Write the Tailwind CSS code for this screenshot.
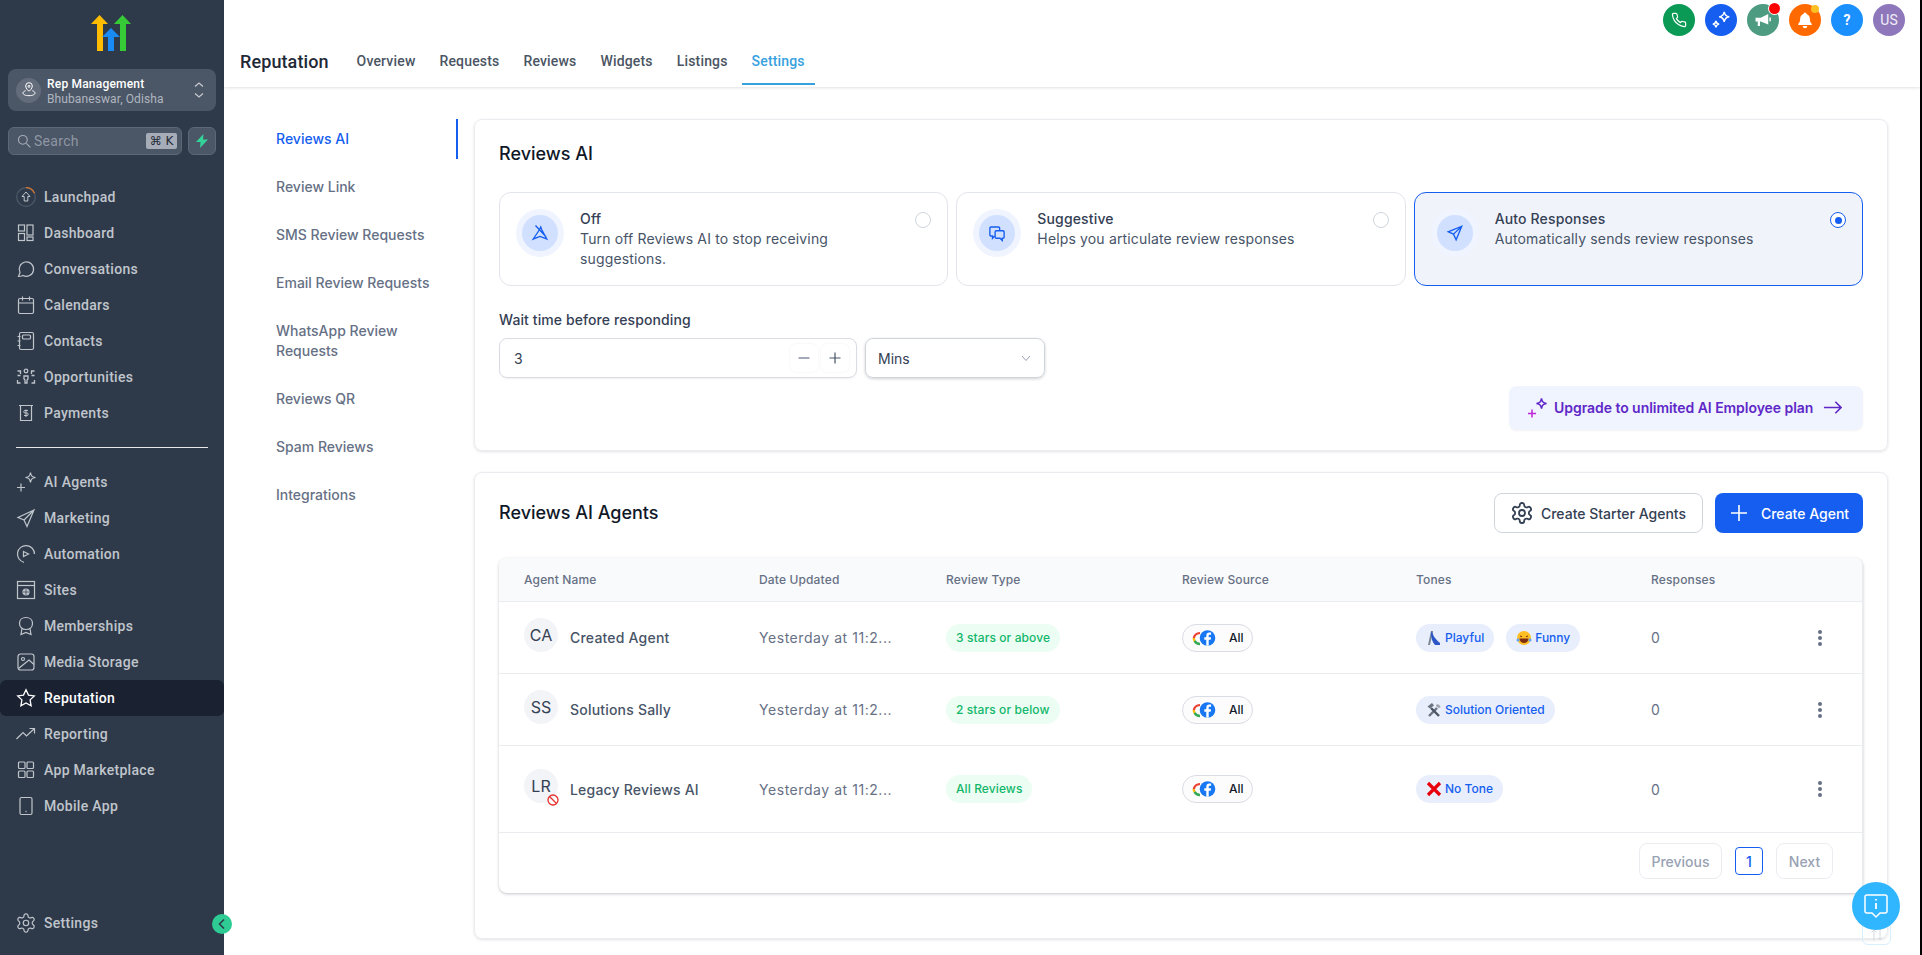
<!DOCTYPE html>
<html lang="en">

<head>
  <meta charset="UTF-8">
  <meta name="viewport" content="width=device-width, initial-scale=1.0">
  <title>Reputation - Settings</title>
  <script src="https://cdn.jsdelivr.net/npm/@tailwindcss/browser@4"></script>
</head>

<body class="bg-black h-screen overflow-hidden [font-family:Inter,sans-serif]">
  <div class="relative flex w-[1920px] h-[955px] bg-white overflow-hidden">

    <!-- Sidebar -->
    <aside class="w-[224px] shrink-0 h-full flex flex-col bg-[#2e3a4a] [font-family:Roboto,sans-serif]">
      <div class="h-[69px] flex justify-center pt-[15px]">
        <svg width="42" height="37" viewBox="0 0 42 37">
          <path d="M0 9 8.500 0 17 9h-5v27H6V9z" fill="#ffbc00" />
          <path d="M25 9 33.500 0 42 9h-5v27h-6V9z" transform="translate(-2 0)" fill="#37ca37" />
          <path d="M11 22 20 13l9 9h-6v14h-6V22z" fill="#188bf6" />
        </svg>
      </div>

      <div class="mx-2 h-[42px] rounded-lg bg-[#4b5666] flex items-center pl-2 pr-3">
        <div class="w-[25px] h-[25px] rounded-full bg-[#626c7a] flex items-center justify-center">
          <svg class="w-4 h-4" viewBox="0 0 24 24" fill="none" stroke="#fff" stroke-width="1.500">
            <path d="M12 14s5-4 5-8a5 5 0 0 0-10 0c0 4 5 8 5 8z" />
            <circle cx="12" cy="6.500" r="1.500" />
            <path d="M7 13c-2.500.8-4 2-4 3.500C3 19 7 20.500 12 20.500s9-1.500 9-4c0-1.500-1.500-2.700-4-3.500" />
          </svg>
        </div>
        <div class="ml-[6px] pt-[4px] flex-1 min-w-0 text-[12px] leading-[15px]">
          <div class="font-medium text-white tracking-[0.2px]">Rep Management</div>
          <div class="text-[#b0b6c0] tracking-[0.1px]">Bhubaneswar, Odisha</div>
        </div>
        <svg class="w-[10px] h-[18px]" viewBox="0 0 10 18" fill="none" stroke="#c8ccd2" stroke-width="1.200">
          <path d="M1 5.500 5 2l4 3.500M1 12.500 5 16l4-3.500" />
        </svg>
      </div>

      <div class="mx-2 mt-4 flex gap-[6px]">
        <div class="w-[174px] h-[28px] rounded-md bg-[#4b5666] border border-[#5d6776] flex items-center pl-2 pr-1">
          <svg class="w-[14px] h-[14px]" viewBox="0 0 24 24" fill="none" stroke="#a5abb5" stroke-width="2">
            <circle cx="10" cy="10" r="7.500" />
            <path d="m16 16 7 7" />
          </svg>
          <span class="ml-[3px] flex-1 text-[14px] tracking-[0.3px] text-[#8f97a4]">Search</span>
          <span class="w-[31px] h-[16px] rounded-[2px] bg-[#a7adb8] text-[#1f2937] text-[12px] leading-[16px] text-center [font-family:'DejaVu_Sans',sans-serif]">⌘ K</span>
        </div>
        <div class="w-[28px] h-[28px] rounded-md bg-[#4b5666] border border-[#5d6776] flex items-center justify-center">
          <svg class="w-[12px] h-[14px]" viewBox="0 0 12 14" fill="#34d399">
            <path d="M7.500 0 0 8h4.500L4 14l8-8.500H7z" />
          </svg>
        </div>
      </div>

      <nav class="mt-6 text-[14px] font-medium tracking-[0.3px] text-[#c0c5cc]">
        <a class="h-9 flex items-center pl-4 gap-2">
          <svg class="w-5 h-5" viewBox="0 0 20 20" fill="none" stroke="#c0c5cc" stroke-width="1">
            <circle cx="10" cy="10" r="9.300" stroke="#4f5a69" stroke-width="1.200" />
            <path d="M10 .7a9.300 9.300 0 0 1 8.500 5.500" stroke="#d9772b" stroke-width="1.200" />
            <path d="M10 5 6 9.500h2.200V14h3.600V9.500H14z" />
          </svg>
          Launchpad
        </a>
        <a class="h-9 flex items-center pl-4 gap-2">
          <svg class="w-5 h-5" viewBox="0 0 20 20" fill="none" stroke="#c0c5cc" stroke-width="1.200">
            <rect x="2.500" y="2" width="6" height="6" />
            <rect x="11" y="2" width="6" height="10" />
            <rect x="2.500" y="10.500" width="6" height="7" />
            <rect x="11" y="14" width="6" height="3.500" />
          </svg>
          Dashboard
        </a>
        <a class="h-9 flex items-center pl-4 gap-2">
          <svg class="w-5 h-5" viewBox="0 0 20 20" fill="none" stroke="#c0c5cc" stroke-width="1.200">
            <path d="M2.500 17.500 4 13.500A7.200 7.200 0 1 1 7 16.500c-1.500.6-3 1-4.500 1z" />
          </svg>
          Conversations
        </a>
        <a class="h-9 flex items-center pl-4 gap-2">
          <svg class="w-5 h-5" viewBox="0 0 20 20" fill="none" stroke="#c0c5cc" stroke-width="1.200">
            <rect x="2.500" y="3.500" width="15" height="15" rx="1.500" />
            <path d="M2.500 8h15M6.500 1.500v4M13.500 1.500v4" />
          </svg>
          Calendars
        </a>
        <a class="h-9 flex items-center pl-4 gap-2">
          <svg class="w-5 h-5" viewBox="0 0 20 20" fill="none" stroke="#c0c5cc" stroke-width="1.200">
            <rect x="3.500" y="1.500" width="14" height="17" rx="1.500" />
            <rect x="6.500" y="4" width="8" height="4" rx="1" />
            <path d="M1.500 5.500h3M1.500 10h3M1.500 14.500h3" />
          </svg>
          Contacts
        </a>
        <a class="h-9 flex items-center pl-4 gap-2">
          <svg class="w-5 h-5" viewBox="0 0 20 20" fill="none" stroke="#c0c5cc" stroke-width="1.300">
            <circle cx="10" cy="4" r="1.800" />
            <path d="M8 9h4v3l-1 1v3H9v-3l-1-1z" />
            <path d="M1.500 4h3v3M18.500 4h-3v3M1.500 13v3h3M15.500 16h3v-3M1.500 8.500h3M15.500 8.500h3" />
          </svg>
          Opportunities
        </a>
        <a class="h-9 flex items-center pl-4 gap-2">
          <svg class="w-5 h-5" viewBox="0 0 20 20" fill="none" stroke="#c0c5cc" stroke-width="1.200">
            <path d="M3 2.500h14M4.500 2.500v15h11v-15" />
            <path d="M12 7.500H9a1 1 0 0 0 0 2.500h2a1 1 0 0 1 0 2.500H8M10 6.500v7.500" stroke-width="1" />
          </svg>
          Payments
        </a>
      </nav>

      <div class="mx-4 mt-4 h-px bg-[#e5e7eb]"></div>

      <nav class="mt-4 text-[14px] font-medium tracking-[0.3px] text-[#c0c5cc]">
        <a class="h-9 flex items-center pl-4 gap-2">
          <svg class="w-5 h-5" viewBox="1 2 20 20" fill="none" stroke="#c0c5cc" stroke-width="1.200">
            <path d="M15.500 2.500c.6 3.500 1.500 4.400 5 5-3.500.6-4.400 1.500-5 5-.6-3.500-1.500-4.400-5-5 3.500-.6 4.400-1.500 5-5z" />
            <path d="M6 13.500v8M2 17.500h8" />
          </svg>
          AI Agents
        </a>
        <a class="h-9 flex items-center pl-4 gap-2">
          <svg class="w-5 h-5" viewBox="0 0 20 20" fill="none" stroke="#c0c5cc" stroke-width="1.200">
            <path d="M18 2 2 9.500l6 2.500 3 6.500zM18 2 8 12" />
          </svg>
          Marketing
        </a>
        <a class="h-9 flex items-center pl-4 gap-2">
          <svg class="w-5 h-5" viewBox="0 0 20 20" fill="none" stroke="#c0c5cc" stroke-width="1.200">
            <path d="M8 18.300A8.500 8.500 0 1 1 18.500 10" />
            <path d="M7.500 7.500 12.500 10l-5 2.500z" />
          </svg>
          Automation
        </a>
        <a class="h-9 flex items-center pl-4 gap-2">
          <svg class="w-5 h-5" viewBox="0 0 20 20" fill="none" stroke="#c0c5cc" stroke-width="1.200">
            <rect x="1.500" y="1.500" width="17" height="17" />
            <path d="M1.500 5.500h17" />
            <circle cx="10" cy="12" r="3" fill="#c0c5cc" />
            <path d="M7 12h6M10 9v6" stroke="#2e3a4a" stroke-width="0.700" />
          </svg>
          Sites
        </a>
        <a class="h-9 flex items-center pl-4 gap-2">
          <svg class="w-5 h-5" viewBox="0 0 20 20" fill="none" stroke="#c0c5cc" stroke-width="1.200">
            <path d="M10 1.500c4 0 6.500 2.700 6.500 6s-2.500 6-6.500 6-6.500-2.700-6.500-6 2.500-6 6.500-6z" />
            <path d="M6 12.500 5 18.500l5-2 5 2-1-6" />
          </svg>
          Memberships
        </a>
        <a class="h-9 flex items-center pl-4 gap-2">
          <svg class="w-5 h-5" viewBox="0 0 20 20" fill="none" stroke="#c0c5cc" stroke-width="1.200">
            <rect x="2" y="2" width="16" height="16" rx="2.500" />
            <circle cx="7" cy="7" r="1.500" />
            <path d="M2.500 16.500 13 8l5 4.500" />
          </svg>
          Media Storage
        </a>
        <a class="h-9 flex items-center pl-4 gap-2 bg-[#1a2232] rounded-md text-white">
          <svg class="w-5 h-5" viewBox="0 0 20 20" fill="none" stroke="#fff" stroke-width="1.300">
            <path d="m10 1.800 2.500 5.300 5.800.8-4.200 4 1 5.800-5.100-2.800-5.100 2.800 1-5.800-4.200-4 5.800-.8z" />
          </svg>
          Reputation
        </a>
        <a class="h-9 flex items-center pl-4 gap-2">
          <svg class="w-5 h-5" viewBox="0 0 20 20" fill="none" stroke="#c0c5cc" stroke-width="1.200">
            <path d="M.5 15 7 8.500l3.500 3.500 8-7.500M13.500 4.500h5v5" />
          </svg>
          Reporting
        </a>
        <a class="h-9 flex items-center pl-4 gap-2">
          <svg class="w-5 h-5" viewBox="0 0 20 20" fill="none" stroke="#c0c5cc" stroke-width="1.200">
            <rect x="2.500" y="2" width="6.500" height="6.500" rx="1" />
            <rect x="11" y="2" width="6.500" height="6.500" rx="1" />
            <rect x="2.500" y="11" width="6.500" height="6.500" rx="1" />
            <rect x="11" y="11" width="6.500" height="6.500" rx="1" />
          </svg>
          App Marketplace
        </a>
        <a class="h-9 flex items-center pl-4 gap-2">
          <svg class="w-5 h-5" viewBox="0 0 20 20" fill="none" stroke="#c0c5cc" stroke-width="1.200">
            <rect x="4" y="1.500" width="12" height="17" rx="1.500" />
            <path d="M9.500 15.500h1" stroke-width="1.500" />
          </svg>
          Mobile App
        </a>
      </nav>

      <a class="mt-auto mb-[14px] h-9 flex items-center pl-4 gap-2 text-[14px] font-medium tracking-[0.3px] text-[#c0c5cc]">
        <svg class="w-5 h-5" viewBox="1 1 22 22" fill="none" stroke="#c0c5cc" stroke-width="1.300">
          <path d="M12.220 2h-.44a2 2 0 0 0-2 2v.18a2 2 0 0 1-1 1.730l-.43.25a2 2 0 0 1-2 0l-.15-.08a2 2 0 0 0-2.730.73l-.22.38a2 2 0 0 0 .73 2.730l.15.1a2 2 0 0 1 1 1.720v.51a2 2 0 0 1-1 1.740l-.15.09a2 2 0 0 0-.73 2.730l.22.38a2 2 0 0 0 2.730.73l.15-.08a2 2 0 0 1 2 0l.43.25a2 2 0 0 1 1 1.730V20a2 2 0 0 0 2 2h.44a2 2 0 0 0 2-2v-.18a2 2 0 0 1 1-1.730l.43-.25a2 2 0 0 1 2 0l.15.08a2 2 0 0 0 2.730-.73l.22-.39a2 2 0 0 0-.73-2.730l-.15-.08a2 2 0 0 1-1-1.740v-.5a2 2 0 0 1 1-1.740l.15-.09a2 2 0 0 0 .73-2.730l-.22-.38a2 2 0 0 0-2.730-.73l-.15.08a2 2 0 0 1-2 0l-.43-.25a2 2 0 0 1-1-1.730V4a2 2 0 0 0-2-2z" />
          <circle cx="12" cy="12" r="3" />
        </svg>
        Settings
      </a>
    </aside>

    <!-- Sidebar collapse toggle -->
    <div class="absolute left-[212px] top-[914px] w-5 h-5 rounded-full bg-[#2ecc94] flex items-center justify-center">
      <svg class="w-[10px] h-3" viewBox="0 0 10 12" fill="none" stroke="#2e3a4a" stroke-width="1.600">
        <path d="M7 1.500 2.500 6 7 10.500" />
      </svg>
    </div>

    <main class="flex-1 min-w-0 flex flex-col">
      <!-- Header -->
      <header class="h-[87px] shrink-0 flex flex-col shadow-[0_1px_3px_rgba(0,0,0,0.12)] [font-family:Roboto,sans-serif]">
        <div class="h-[40px] flex justify-end items-start pt-1 pr-[15px] gap-[10px]">
          <div class="w-8 h-8 rounded-full bg-[#0b9a55] flex items-center justify-center">
            <svg class="w-4 h-4" viewBox="0 0 24 24" fill="none" stroke="#fff" stroke-width="1.800">
              <path d="M22 16.920v3a2 2 0 0 1-2.180 2 19.790 19.790 0 0 1-8.630-3.070 19.500 19.500 0 0 1-6-6 19.790 19.790 0 0 1-3.070-8.670A2 2 0 0 1 4.110 2h3a2 2 0 0 1 2 1.720 12.840 12.840 0 0 0 .7 2.810 2 2 0 0 1-.45 2.110L8.090 9.910a16 16 0 0 0 6 6l1.270-1.270a2 2 0 0 1 2.110-.45 12.840 12.840 0 0 0 2.810.7A2 2 0 0 1 22 16.920z" />
            </svg>
          </div>
          <div class="w-8 h-8 rounded-full bg-[#155eef] flex items-center justify-center">
            <svg class="w-[22px] h-[22px]" viewBox="0 0 24 24" fill="none" stroke="#fff" stroke-width="1.600">
              <path d="M15.500 3c.5 3.500 2 5 5.500 5.500-3.500.5-5 2-5.500 5.500-.5-3.500-2-5-5.500-5.500 3.500-.5 5-2 5.500-5.500z" />
              <path d="M6.500 13c.3 2.500 1 3.200 3.500 3.500-2.500.3-3.200 1-3.500 3.500-.3-2.500-1-3.200-3.500-3.500 2.500-.3 3.200-1 3.500-3.500z" />
            </svg>
          </div>
          <div class="relative w-8 h-8 rounded-full bg-[#4d9b80] flex items-center justify-center">
            <svg class="w-[18px] h-[18px]" viewBox="0 0 24 24" fill="#fff">
              <path d="M2 9h7l10-5v14l-10-4H8v6H5v-6H2z" />
              <path d="M20.500 8.500h2v5h-2z" />
            </svg>
            <span class="absolute -top-[1px] right-[-1px] w-[11px] h-[11px] rounded-full bg-[#f00] ring-1 ring-white"></span>
          </div>
          <div class="relative w-8 h-8 rounded-full bg-[#ff6a00] flex items-center justify-center">
            <svg class="w-[18px] h-[18px]" viewBox="0 0 24 24" fill="#fff">
              <path d="M12 2a2 2 0 0 1 2 2c3 1 4.500 3.500 4.500 6.500 0 3.500 1 5 2.500 6.500v1.500H3V17c1.500-1.500 2.500-3 2.500-6.500C5.500 7.500 7 5 10 4a2 2 0 0 1 2-2z" />
              <path d="M9 20h6a3 3 0 0 1-6 0z" />
            </svg>
            <span class="absolute top-[1px] right-[2px] w-2 h-2 rounded-full bg-[#fbbf24]"></span>
          </div>
          <div class="w-8 h-8 rounded-full bg-[#1a90ff] flex items-center justify-center text-white text-[14px] font-bold">?</div>
          <div class="w-8 h-8 rounded-full bg-[#8e78bb] flex items-center justify-center text-[#f0edf6] text-[14px]">US</div>
        </div>
        <div class="h-[45px] flex items-center pl-4">
          <span class="-mt-[2px] text-[18px] font-medium text-[#1f2937] tracking-[0.1px]">Reputation</span>
          <div class="ml-[18px] h-full flex gap-1 text-[14px] font-medium tracking-[0.17px] text-[#4b5563]">
            <a class="px-[10px] flex items-center border-b-2 border-transparent">Overview</a>
            <a class="px-[10px] flex items-center border-b-2 border-transparent">Requests</a>
            <a class="px-[10px] flex items-center border-b-2 border-transparent">Reviews</a>
            <a class="px-[10px] flex items-center border-b-2 border-transparent">Widgets</a>
            <a class="px-[10px] flex items-center border-b-2 border-transparent">Listings</a>
            <a class="px-[10px] flex items-center border-b-2 border-[#37a1de] text-[#37a1de]">Settings</a>
          </div>
        </div>
      </header>

      <div class="flex-1 min-h-0 flex pt-8 pl-8 pr-8">
        <!-- Settings sub navigation -->
        <nav class="w-[202px] shrink-0 mr-4 flex flex-col gap-2 text-[14px] font-medium leading-5 text-[#667085]">
          <a class="min-h-10 py-[10px] pl-5 pr-5 text-[#155eef] border-r-2 border-[#155eef]">Reviews AI</a>
          <a class="min-h-10 py-[10px] pl-5 pr-5">Review Link</a>
          <a class="min-h-10 py-[10px] pl-5 pr-5">SMS Review Requests</a>
          <a class="min-h-10 py-[10px] pl-5 pr-5">Email Review Requests</a>
          <a class="min-h-10 py-[10px] pl-5 pr-5">WhatsApp Review Requests</a>
          <a class="min-h-10 py-[10px] pl-5 pr-5">Reviews QR</a>
          <a class="min-h-10 py-[10px] pl-5 pr-5">Spam Reviews</a>
          <a class="min-h-10 py-[10px] pl-5 pr-5">Integrations</a>
        </nav>

        <div class="w-[1414px] shrink-0">
          <!-- Reviews AI card -->
          <section class="h-[332px] border border-[#eaecf0] rounded-lg shadow-[0_1px_3px_rgba(16,24,40,0.12)] px-6 pt-5">
            <h2 class="text-[18px] leading-7 font-medium text-[#101828]">Reviews AI</h2>
            <div class="mt-6 grid grid-cols-3 gap-2 w-[1364px]">
              <div class="relative h-[94px] rounded-xl border border-[#e1e4ea] bg-white flex gap-4 p-4">
                <div class="w-12 h-12 shrink-0 rounded-full bg-[#eff4ff] flex items-center justify-center">
                  <div class="w-9 h-9 rounded-full bg-[#d1e0ff] flex items-center justify-center">
                    <svg class="w-[18px] h-[18px]" viewBox="0 0 24 24" fill="none" stroke="#155eef" stroke-width="1.800">
                      <path d="M3 20 11 8l2-4 1 3 7 13-9-3.500zM6 2l14 15" />
                    </svg>
                  </div>
                </div>
                <div class="text-[14px] leading-5 text-[#475467] tracking-[0.15px]">
                  <div class="font-medium text-[#344054]">Off</div>
                  <div class="w-[300px]">Turn off Reviews AI to stop receiving suggestions.</div>
                </div>
                <span class="absolute top-[19px] right-4 w-4 h-4 rounded-full border border-[#d0d5dd] bg-white"></span>
              </div>
              <div class="relative h-[94px] rounded-xl border border-[#e1e4ea] bg-white flex gap-4 p-4">
                <div class="w-12 h-12 shrink-0 rounded-full bg-[#eff4ff] flex items-center justify-center">
                  <div class="w-9 h-9 rounded-full bg-[#d1e0ff] flex items-center justify-center">
                    <svg class="w-[18px] h-[18px]" viewBox="0 0 24 24" fill="none" stroke="#155eef" stroke-width="1.800">
                      <path d="M4 4h10a1.500 1.500 0 0 1 1.500 1.500V9M9 16l-3 3v-3H4a1.500 1.500 0 0 1-1.500-1.500v-9A1.500 1.500 0 0 1 4 4" />
                      <path d="M11 9h9a1.500 1.500 0 0 1 1.500 1.500v7A1.500 1.500 0 0 1 20 19h-1v3l-3-3h-5a1.500 1.500 0 0 1-1.500-1.500v-7A1.500 1.500 0 0 1 11 9z" />
                    </svg>
                  </div>
                </div>
                <div class="text-[14px] leading-5 text-[#475467] tracking-[0.15px]">
                  <div class="font-medium text-[#344054]">Suggestive</div>
                  <div>Helps you articulate review responses</div>
                </div>
                <span class="absolute top-[19px] right-4 w-4 h-4 rounded-full border border-[#d0d5dd] bg-white"></span>
              </div>
              <div class="relative h-[94px] rounded-xl border border-[#155eef] bg-[#f1f3fa] flex gap-4 p-4">
                <div class="w-12 h-12 shrink-0 rounded-full bg-[#eff4ff] flex items-center justify-center">
                  <div class="w-9 h-9 rounded-full bg-[#d1e0ff] flex items-center justify-center">
                    <svg class="w-[18px] h-[18px]" viewBox="0 0 24 24" fill="none" stroke="#155eef" stroke-width="1.800">
                      <path d="M21 3 3 10.500l7 3 3.500 7.500zM21 3 10 13.500" />
                    </svg>
                  </div>
                </div>
                <div class="text-[14px] leading-5 text-[#475467] tracking-[0.15px]">
                  <div class="font-medium text-[#344054]">Auto Responses</div>
                  <div>Automatically sends review responses</div>
                </div>
                <span class="absolute top-[19px] right-4 w-4 h-4 rounded-full border border-[#155eef] bg-white flex items-center justify-center">
                  <span class="w-[7px] h-[7px] rounded-full bg-[#155eef]"></span>
                </span>
              </div>
            </div>

            <div class="mt-6 text-[14px] leading-5 font-medium tracking-[0.1px] text-[#344054]">Wait time before responding</div>
            <div class="mt-2 flex gap-[8px]">
              <div class="w-[358px] h-10 rounded-lg border border-[#d9dce3] shadow-[0_1px_2px_rgba(16,24,40,0.06)] flex items-center pl-[14px] pr-[7px] text-[14px] text-[#344054]">
                <span class="flex-1">3</span>
                <button class="w-7 h-7 rounded-md shadow-[0_0_2px_rgba(16,24,40,0.08)] flex items-center justify-center text-[#667085]">
                  <svg class="w-4 h-4" viewBox="0 0 16 16" fill="none" stroke="currentColor" stroke-width="1.200"><path d="M2.500 8h11" /></svg>
                </button>
                <button class="ml-[3px] w-7 h-7 rounded-md shadow-[0_0_2px_rgba(16,24,40,0.08)] flex items-center justify-center text-[#475467]">
                  <svg class="w-4 h-4" viewBox="0 0 16 16" fill="none" stroke="currentColor" stroke-width="1.200"><path d="M2.500 8h11M8 2.500v11" /></svg>
                </button>
              </div>
              <div class="w-[180px] h-10 rounded-lg border border-[#d0d5dd] shadow-[0_1px_3px_rgba(16,24,40,0.2)] flex items-center justify-between pl-3 pr-3 text-[14px] text-[#344054]">
                <span>Mins</span>
                <svg class="w-3 h-3" viewBox="0 0 12 12" fill="none" stroke="#98a2b3"><path d="m2 4 4 4.500L10 4" /></svg>
              </div>
            </div>
            <div class="mt-2 flex justify-end w-[1364px]">
              <button class="w-[354px] h-[44px] pb-[1px] rounded-lg bg-[#eff4ff] shadow-[0_1px_2px_rgba(16,24,40,0.05)] flex items-center pl-[18px] gap-[7px] text-[14px] font-semibold tracking-[-0.05px] text-[#6027c8]">
                <svg class="w-5 h-5" viewBox="1 2 20 20" fill="none" stroke-width="1.500">
                  <path d="M15.500 2.500c.6 3.500 1.500 4.400 5 5-3.500.6-4.400 1.500-5 5-.6-3.500-1.500-4.400-5-5 3.500-.6 4.400-1.500 5-5z" stroke="#6027c8" />
                  <path d="M6 13.500v8M2 17.500h8" stroke="#c026d3" />
                </svg>
                Upgrade to unlimited AI Employee plan
                <svg class="ml-[3px] w-[19px] h-[19px]" viewBox="0 0 20 20" fill="none" stroke="#6027c8" stroke-width="1.700"><path d="M1 10h18M13 4l6 6-6 6" /></svg>
              </button>
            </div>
          </section>

          <!-- Reviews AI Agents card -->
          <section class="mt-[21px] h-[467px] border border-[#eaecf0] rounded-lg shadow-[0_1px_3px_rgba(16,24,40,0.12)] px-6 pt-5">
            <div class="flex items-center justify-between w-[1364px]">
              <h2 class="text-[18px] leading-7 font-medium text-[#101828]">Reviews AI Agents</h2>
              <div class="flex gap-3">
                <button class="w-[209px] h-10 rounded-lg border border-[#d0d5dd] flex items-center justify-center gap-[8px] text-[14px] font-medium text-[#344054]">
                  <svg class="w-[22px] h-[22px]" viewBox="1 1 22 22" fill="none" stroke="#344054" stroke-width="1.800">
                    <path d="M12.220 2h-.44a2 2 0 0 0-2 2v.18a2 2 0 0 1-1 1.730l-.43.25a2 2 0 0 1-2 0l-.15-.08a2 2 0 0 0-2.730.73l-.22.38a2 2 0 0 0 .73 2.730l.15.1a2 2 0 0 1 1 1.720v.51a2 2 0 0 1-1 1.740l-.15.09a2 2 0 0 0-.73 2.730l.22.38a2 2 0 0 0 2.730.73l.15-.08a2 2 0 0 1 2 0l.43.25a2 2 0 0 1 1 1.730V20a2 2 0 0 0 2 2h.44a2 2 0 0 0 2-2v-.18a2 2 0 0 1 1-1.730l.43-.25a2 2 0 0 1 2 0l.15.08a2 2 0 0 0 2.730-.73l.22-.39a2 2 0 0 0-.73-2.730l-.15-.08a2 2 0 0 1-1-1.740v-.5a2 2 0 0 1 1-1.740l.15-.09a2 2 0 0 0 .73-2.730l-.22-.38a2 2 0 0 0-2.730-.73l-.15.08a2 2 0 0 1-2 0l-.43-.25a2 2 0 0 1-1-1.730V4a2 2 0 0 0-2-2z" />
                    <circle cx="12" cy="12" r="3" />
                  </svg>
                  Create Starter Agents
                </button>
                <button class="w-[148px] h-10 rounded-lg bg-[#155eef] flex items-center justify-center gap-3 text-[14px] font-medium text-white">
                  <svg class="w-5 h-5" viewBox="0 0 20 20" fill="none" stroke="#fff" stroke-width="1.600"><path d="M2 10h16M10 2v16" /></svg>
                  Create Agent
                </button>
              </div>
            </div>

            <div class="mt-[25px] w-[1364px] h-[335px] rounded-lg border-r border-[#eaecf0] shadow-[0_1px_3px_rgba(16,24,40,0.25)] overflow-hidden">
              <div class="h-[44px] bg-[#f9fafb] border-b border-[#eaecf0] pl-[25px] grid grid-cols-[235px_187px_236px_234px_235px_1fr] items-center text-[12px] font-medium tracking-[0.15px] text-[#667085]">
                <span>Agent Name</span>
                <span>Date Updated</span>
                <span>Review Type</span>
                <span>Review Source</span>
                <span>Tones</span>
                <span>Responses</span>
              </div>

              <div class="h-[72px] border-b border-[#eaecf0] pl-[25px] grid grid-cols-[235px_187px_236px_234px_235px_1fr] items-center text-[14px]">
                <div class="flex items-center gap-3 font-medium tracking-[0.2px] text-[#475467]">
                  <span class="w-[34px] h-[34px] -mt-[6px] rounded-full bg-[#f2f4f7] flex items-center justify-center text-[16px] font-normal tracking-normal text-[#344054]">CA</span>
                  Created Agent
                </div>
                <span class="text-[#667085] tracking-[0.55px]">Yesterday at 11:2...</span>
                <span class="w-fit h-7 px-[10px] rounded-full bg-[#ecfdf3] text-[#12b76a] text-[12px] font-medium tracking-[0.1px] flex items-center">3 stars or above</span>
                <span class="w-[71px] h-7 rounded-full border border-[#d9dce3] bg-[#fcfcfd] pl-[9px] flex items-center text-[12px] font-medium text-[#101828]">
                  <svg class="w-[27px] h-[18px]" viewBox="0 0 27 18">
                    <path d="M8 4.100A6 6 0 0 0 1.800 9" fill="none" stroke="#ea4335" stroke-width="2.400" />
                    <path d="M1.800 9c0 1 .3 2 .8 2.900" fill="none" stroke="#fbbc05" stroke-width="2.400" />
                    <path d="M2.600 11.900A6 6 0 0 0 8 15" fill="none" stroke="#34a853" stroke-width="2.400" />
                    <circle cx="15.500" cy="9" r="8.500" fill="#fff" />
                    <circle cx="15.500" cy="9" r="7.800" fill="#1877f2" />
                    <path d="M16.700 16.700v-6h2l.4-2.400h-2.400V6.900c0-.7.3-1.200 1.200-1.200h1.200V3.600c-.3 0-1-.1-1.800-.1-1.800 0-3 1.100-3 3v1.800h-2v2.400h2v6z" fill="#fff" />
                  </svg>
                  <span class="ml-[10px]">All</span>
                </span>
                <div class="flex gap-3 text-[12px] font-medium text-[#155eef]">
                  <span class="h-7 pl-[10px] pr-[10px] rounded-full bg-[#e8eefc] flex items-center gap-[3px]">
                    <svg class="w-4 h-4" viewBox="0 0 16 16">
                      <path d="M2 15 5 1h2l-3 14z" fill="#7c8798" />
                      <path d="M6 1c1 4 2 7 8 12v2H9C6 12 5 7 5 3z" fill="#2b56c7" />
                    </svg>
                    Playful
                  </span>
                  <span class="h-7 pl-[10px] pr-[10px] rounded-full bg-[#e8eefc] flex items-center gap-[3px]">
                    <svg class="w-4 h-4" viewBox="0 0 16 16">
                      <circle cx="8" cy="8" r="7" fill="#fbbf24" />
                      <path d="M3.500 8.500h9A4.500 4.500 0 0 1 3.500 8.500z" fill="#7c2d12" />
                      <path d="M4 6l2 .8M12 6l-2 .8" stroke="#7c2d12" fill="none" />
                      <path d="M.5 10c0-1 1-1.500 2.500-1.500l.5 2.500c-1.500 1-3 .5-3-1zM15.500 10c0-1-1-1.500-2.500-1.500l-.5 2.500c1.500 1 3 .5 3-1z" fill="#60a5fa" />
                    </svg>
                    Funny
                  </span>
                </div>
                <div class="flex items-center justify-between pr-[40px] text-[#667085]">
                  <span>0</span>
                  <svg class="w-1 h-4" viewBox="0 0 4 16" fill="#667085"><circle cx="2" cy="2" r="2" /><circle cx="2" cy="8" r="2" /><circle cx="2" cy="14" r="2" /></svg>
                </div>
              </div>

              <div class="h-[72px] border-b border-[#eaecf0] pl-[25px] grid grid-cols-[235px_187px_236px_234px_235px_1fr] items-center text-[14px]">
                <div class="flex items-center gap-3 font-medium tracking-[0.2px] text-[#475467]">
                  <span class="w-[34px] h-[34px] -mt-[6px] rounded-full bg-[#f2f4f7] flex items-center justify-center text-[16px] font-normal tracking-normal text-[#344054]">SS</span>
                  Solutions Sally
                </div>
                <span class="text-[#667085] tracking-[0.55px]">Yesterday at 11:2...</span>
                <span class="w-fit h-7 px-[10px] rounded-full bg-[#ecfdf3] text-[#12b76a] text-[12px] font-medium tracking-[0.1px] flex items-center">2 stars or below</span>
                <span class="w-[71px] h-7 rounded-full border border-[#d9dce3] bg-[#fcfcfd] pl-[9px] flex items-center text-[12px] font-medium text-[#101828]">
                  <svg class="w-[27px] h-[18px]" viewBox="0 0 27 18">
                    <path d="M8 4.100A6 6 0 0 0 1.800 9" fill="none" stroke="#ea4335" stroke-width="2.400" />
                    <path d="M1.800 9c0 1 .3 2 .8 2.900" fill="none" stroke="#fbbc05" stroke-width="2.400" />
                    <path d="M2.600 11.900A6 6 0 0 0 8 15" fill="none" stroke="#34a853" stroke-width="2.400" />
                    <circle cx="15.500" cy="9" r="8.500" fill="#fff" />
                    <circle cx="15.500" cy="9" r="7.800" fill="#1877f2" />
                    <path d="M16.700 16.700v-6h2l.4-2.400h-2.400V6.900c0-.7.3-1.200 1.200-1.200h1.200V3.600c-.3 0-1-.1-1.800-.1-1.800 0-3 1.100-3 3v1.800h-2v2.400h2v6z" fill="#fff" />
                  </svg>
                  <span class="ml-[10px]">All</span>
                </span>
                <div class="flex gap-3 text-[12px] font-medium text-[#155eef]">
                  <span class="h-7 pl-[10px] pr-[10px] rounded-full bg-[#e8eefc] flex items-center gap-[3px]">
                    <svg class="w-4 h-4" viewBox="0 0 16 16" fill="none" stroke-width="2.400">
                      <path d="M3 14 11 6" stroke="#6b7280" />
                      <path d="M13 14 5 6" stroke="#4b5563" />
                      <path d="M1.500 4.500 6 1l2 2.500-4 3z" fill="#6b7280" stroke="none" />
                      <path d="M10.500 2.500a3 3 0 0 1 4 3l-2 .5-2.500-2z" fill="#9ca3af" stroke="none" />
                    </svg>
                    Solution Oriented
                  </span>
                </div>
                <div class="flex items-center justify-between pr-[40px] text-[#667085]">
                  <span>0</span>
                  <svg class="w-1 h-4" viewBox="0 0 4 16" fill="#667085"><circle cx="2" cy="2" r="2" /><circle cx="2" cy="8" r="2" /><circle cx="2" cy="14" r="2" /></svg>
                </div>
              </div>

              <div class="h-[87px] border-b border-[#eaecf0] pl-[25px] grid grid-cols-[235px_187px_236px_234px_235px_1fr] items-center text-[14px]">
                <div class="flex items-center gap-3 font-medium tracking-[0.2px] text-[#475467]">
                  <span class="relative w-[34px] h-[34px] -mt-[6px] rounded-full bg-[#f2f4f7] flex items-center justify-center text-[16px] font-normal tracking-normal text-[#344054]">
                    LR
                    <svg class="absolute right-[-1px] bottom-[-3px] w-3 h-3" viewBox="0 0 12 12" fill="none" stroke="#e5312d" stroke-width="1.300">
                      <circle cx="6" cy="6" r="5" />
                      <path d="m2.500 2.500 7 7" />
                    </svg>
                  </span>
                  Legacy Reviews AI
                </div>
                <span class="text-[#667085] tracking-[0.55px]">Yesterday at 11:2...</span>
                <span class="w-fit h-7 px-[10px] rounded-full bg-[#ecfdf3] text-[#12b76a] text-[12px] font-medium tracking-[0.1px] flex items-center">All Reviews</span>
                <span class="w-[71px] h-7 rounded-full border border-[#d9dce3] bg-[#fcfcfd] pl-[9px] flex items-center text-[12px] font-medium text-[#101828]">
                  <svg class="w-[27px] h-[18px]" viewBox="0 0 27 18">
                    <path d="M8 4.100A6 6 0 0 0 1.800 9" fill="none" stroke="#ea4335" stroke-width="2.400" />
                    <path d="M1.800 9c0 1 .3 2 .8 2.900" fill="none" stroke="#fbbc05" stroke-width="2.400" />
                    <path d="M2.600 11.900A6 6 0 0 0 8 15" fill="none" stroke="#34a853" stroke-width="2.400" />
                    <circle cx="15.500" cy="9" r="8.500" fill="#fff" />
                    <circle cx="15.500" cy="9" r="7.800" fill="#1877f2" />
                    <path d="M16.700 16.700v-6h2l.4-2.400h-2.400V6.900c0-.7.3-1.200 1.200-1.200h1.200V3.600c-.3 0-1-.1-1.800-.1-1.800 0-3 1.100-3 3v1.800h-2v2.400h2v6z" fill="#fff" />
                  </svg>
                  <span class="ml-[10px]">All</span>
                </span>
                <div class="flex gap-3 text-[12px] font-medium text-[#155eef]">
                  <span class="h-7 pl-[10px] pr-[10px] rounded-full bg-[#e8eefc] flex items-center gap-[3px]">
                    <svg class="w-4 h-4" viewBox="0 0 16 16" fill="none" stroke="#e8000d" stroke-width="3.200">
                      <path d="m2 2 12 12M14 2 2 14" />
                    </svg>
                    No Tone
                  </span>
                </div>
                <div class="flex items-center justify-between pr-[40px] text-[#667085]">
                  <span>0</span>
                  <svg class="w-1 h-4" viewBox="0 0 4 16" fill="#667085"><circle cx="2" cy="2" r="2" /><circle cx="2" cy="8" r="2" /><circle cx="2" cy="14" r="2" /></svg>
                </div>
              </div>

              <div class="h-[60px] flex items-center justify-end pr-[29px] pb-[4px] text-[14px] font-medium text-[#98a2b3]">
                <button class="w-[83px] h-9 rounded-lg border border-[#eaecf0]">Previous</button>
                <button class="ml-[13px] w-7 h-7 rounded-[4px] border border-[#155eef] text-[#155eef]">1</button>
                <button class="ml-[13px] w-[57px] h-9 rounded-lg border border-[#eaecf0]">Next</button>
              </div>
            </div>
          </section>
        </div>
      </div>
    </main>

    <!-- Scroll helper behind the chat bubble -->
    <div class="absolute left-[1862px] top-[925px] w-[29px] h-[20px] rounded-b-md border border-[#d6f0ff] flex items-center justify-center">
      <svg class="w-4 h-4" viewBox="0 0 16 16" fill="none" stroke="#d5dae1"><path d="M5 14V3M2.500 5.500 5 3l2.500 2.500M11 2v11M8.500 10.500 11 13l2.500-2.500" /></svg>
    </div>

    <!-- Chat bubble -->
    <div class="absolute left-[1852px] top-[882px] w-12 h-12 rounded-full bg-[#30b5ff] flex items-center justify-center">
      <svg class="w-7 h-7" viewBox="0 0 28 28" fill="none" stroke="#fff" stroke-width="1.500">
        <path d="M5 3h18a2 2 0 0 1 2 2v14a2 2 0 0 1-2 2h-5l-4 4-4-4H5a2 2 0 0 1-2-2V5a2 2 0 0 1 2-2z" />
        <path d="M14 11v6M14 7v1.500" stroke-width="1.800" />
      </svg>
    </div>
  </div>
</body>

</html>
